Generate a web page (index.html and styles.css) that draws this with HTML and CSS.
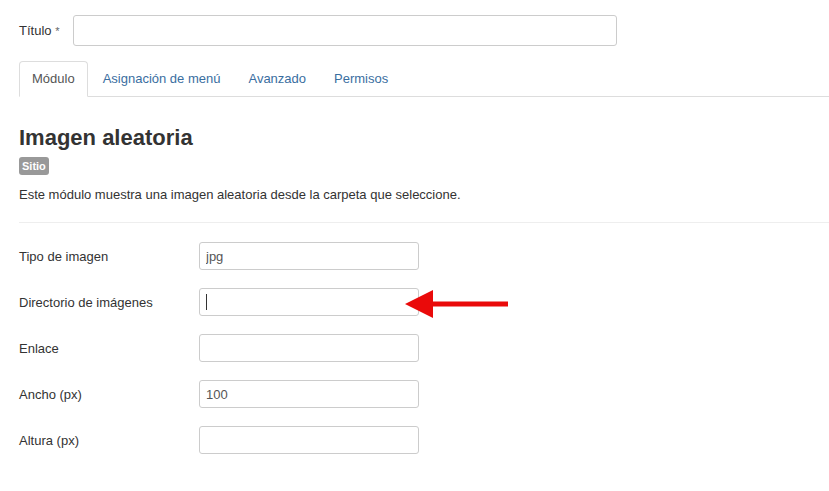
FILE: index.html
```html
<!DOCTYPE html>
<html lang="es">
<head>
    <meta charset="UTF-8">
    <meta name="viewport" content="width=device-width, initial-scale=1.0">
    <title>Imagen aleatoria</title>
    <link rel="stylesheet" href="styles.css">
</head>
<body>
    <div class="page">
        <div class="title-row">
            <label class="title-label">Título <span class="star">*</span></label>
            <input class="title-input" type="text">
        </div>

        <ul class="tabs">
            <li class="tab active"><a href="#">Módulo</a></li>
            <li class="tab"><a href="#">Asignación de menú</a></li>
            <li class="tab"><a href="#">Avanzado</a></li>
            <li class="tab"><a href="#">Permisos</a></li>
        </ul>

        <h1 class="module-title">Imagen aleatoria</h1>
        <span class="badge">Sitio</span>
        <p class="module-desc">Este módulo muestra una imagen aleatoria desde la carpeta que seleccione.</p>
        <hr class="divider">

        <div class="form">
            <div class="field">
                <label>Tipo de imagen</label>
                <input type="text" value="jpg">
            </div>
            <div class="field">
                <label>Directorio de imágenes</label>
                <div class="focused-wrap">
                    <div class="fake-input"><span class="caret"></span></div>
                    <!-- red pointer arrow over the field -->
                    <svg class="pointer" width="104" height="30" viewBox="0 0 104 30">
                        <polygon points="0,15 28,1 28,12.5 103,12.5 103,17.5 28,17.5 28,29" fill="#ea0a0a"/>
                    </svg>
                </div>
            </div>
            <div class="field">
                <label>Enlace</label>
                <input type="text">
            </div>
            <div class="field">
                <label>Ancho (px)</label>
                <input type="text" value="100">
            </div>
            <div class="field">
                <label>Altura (px)</label>
                <input type="text">
            </div>
        </div>
    </div>
</body>
</html>
```

FILE: styles.css
```css
body {
  margin: 0;
  background: #fff;
  font-family: "Liberation Sans", Arial, sans-serif;
  font-size: 13px;
  color: #333;
}

.page {
  padding: 15px 0 0 19px;
}

/* Title row */
.title-row {
  display: flex;
  align-items: center;
}

.title-label {
  width: 54px;
  color: #333;
}

.star {
  font-size: 11px;
  color: #666;
}

.title-input {
  box-sizing: border-box;
  width: 544px;
  height: 31px;
  border: 1px solid #ccc;
  border-radius: 3px;
  outline: none;
}

/* Tabs */
.tabs {
  list-style: none;
  margin: 15px 0 0 0;
  padding: 0;
  display: flex;
  border-bottom: 1px solid #ddd;
}

.tab {
  margin-right: 2px;
  margin-bottom: -1px;
  border: 1px solid transparent;
  border-radius: 4px 4px 0 0;
}

.tab a {
  display: block;
  padding: 0 12px;
  line-height: 34px;
  text-decoration: none;
  color: #3a6e9f;
}

.tab.active {
  border-color: #ddd;
  border-bottom-color: #fff;
  background: #fff;
}

.tab.active a {
  color: #555;
}

/* Module header */
.module-title {
  margin: 28px 0 0 0;
  font-size: 22px;
  line-height: 26px;
  font-weight: 700;
  color: #333;
}

.badge {
  display: inline-block;
  margin-top: 6px;
  padding: 0 3px;
  background: #999;
  color: #fff;
  font-size: 11px;
  font-weight: 700;
  line-height: 18px;
  border-radius: 3px;
}

.module-desc {
  margin: 11px 0 0 0;
  line-height: 18px;
}

.divider {
  margin: 18px 0 0 0;
  border: 0;
  border-top: 1px solid #eee;
}

/* Form fields */
.form {
  padding-top: 19px;
}

.field {
  display: flex;
  align-items: center;
  margin-bottom: 18px;
}

.field label {
  width: 180px;
  color: #333;
}

.field input,
.fake-input {
  box-sizing: border-box;
  width: 220px;
  height: 28px;
  padding: 0 6px;
  border: 1px solid #ccc;
  border-radius: 3px;
  font-family: "Liberation Sans", Arial, sans-serif;
  font-size: 13px;
  color: #555;
  outline: none;
}

.focused-wrap {
  position: relative;
}

.fake-input {
  display: flex;
  align-items: center;
}

.caret {
  width: 1px;
  height: 16px;
  background: #333;
}

.pointer {
  position: absolute;
  left: 206px;
  top: 1px;
}
```
